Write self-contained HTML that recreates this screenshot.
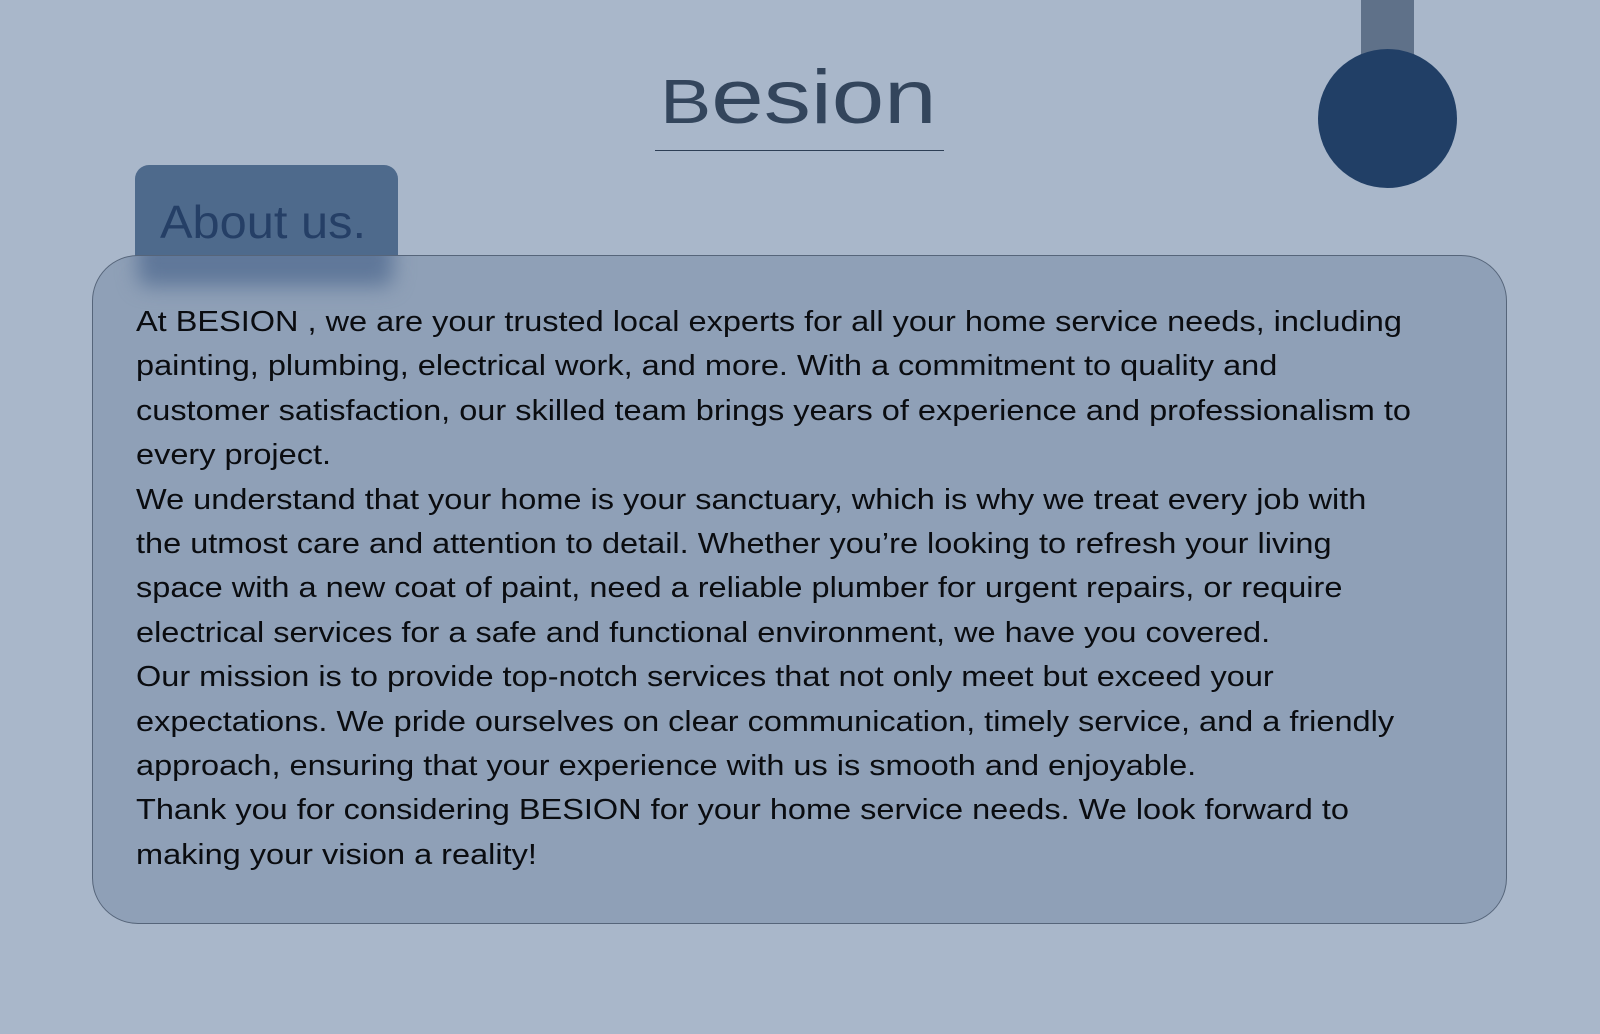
<!DOCTYPE html>
<html><head><meta charset="utf-8"><style>
html,body{margin:0;padding:0}
body{width:1600px;height:1034px;background:#a9b7ca;position:relative;overflow:hidden;font-family:"Liberation Sans",sans-serif}
.bar{position:absolute;left:1361px;top:0;width:53px;height:60px;background:#5f7189}
.circ{position:absolute;left:1318px;top:49px;width:139px;height:139px;border-radius:50%;background:#213f66}
.title{position:absolute;left:660px;top:53px;height:90px;color:#33455c;line-height:90px;white-space:nowrap;transform-origin:left top;transform:scaleX(1.24)}
.title .b{font-size:62px}
.title .r{font-size:76px;letter-spacing:0px}
.ul{position:absolute;left:655px;top:150px;width:289px;height:1px;background:#2d3e55}
.label{position:absolute;left:135px;top:165px;width:263px;height:110px;border-radius:14px;background:#4e6a8c}
.label span{position:absolute;left:25px;top:30px;font-size:46px;color:#253f66;transform-origin:left top;transform:scaleX(1.06)}
.card{position:absolute;left:92px;top:255px;width:1413px;height:667px;border:1px solid #56657a;border-radius:46px;background:#8fa0b7;overflow:hidden}
.shadow{position:absolute;left:45px;top:-20px;width:255px;height:50px;background:#5f7799;filter:blur(10px);border-radius:10px}
.txt{position:absolute;left:43px;top:44px;font-size:28.5px;line-height:44.4px;color:#0a0c10;white-space:nowrap;transform-origin:left top;transform:scaleX(1.14)}
</style></head><body>
<div class="bar"></div><div class="circ"></div>
<div class="title"><span class="b">B</span><span class="r">esion</span></div><div class="ul"></div>
<div class="label"><span>About us.</span></div>
<div class="card"><div class="shadow"></div>
<div class="txt">At BESION , we are your trusted local experts for all your home service needs, including<br>painting, plumbing, electrical work, and more. With a commitment to quality and<br>customer satisfaction, our skilled team brings years of experience and professionalism to<br>every project.<br>We understand that your home is your sanctuary, which is why we treat every job with<br>the utmost care and attention to detail. Whether you’re looking to refresh your living<br>space with a new coat of paint, need a reliable plumber for urgent repairs, or require<br>electrical services for a safe and functional environment, we have you covered.<br>Our mission is to provide top-notch services that not only meet but exceed your<br>expectations. We pride ourselves on clear communication, timely service, and a friendly<br>approach, ensuring that your experience with us is smooth and enjoyable.<br>Thank you for considering BESION for your home service needs. We look forward to<br>making your vision a reality!</div>
</div>
</body></html>
